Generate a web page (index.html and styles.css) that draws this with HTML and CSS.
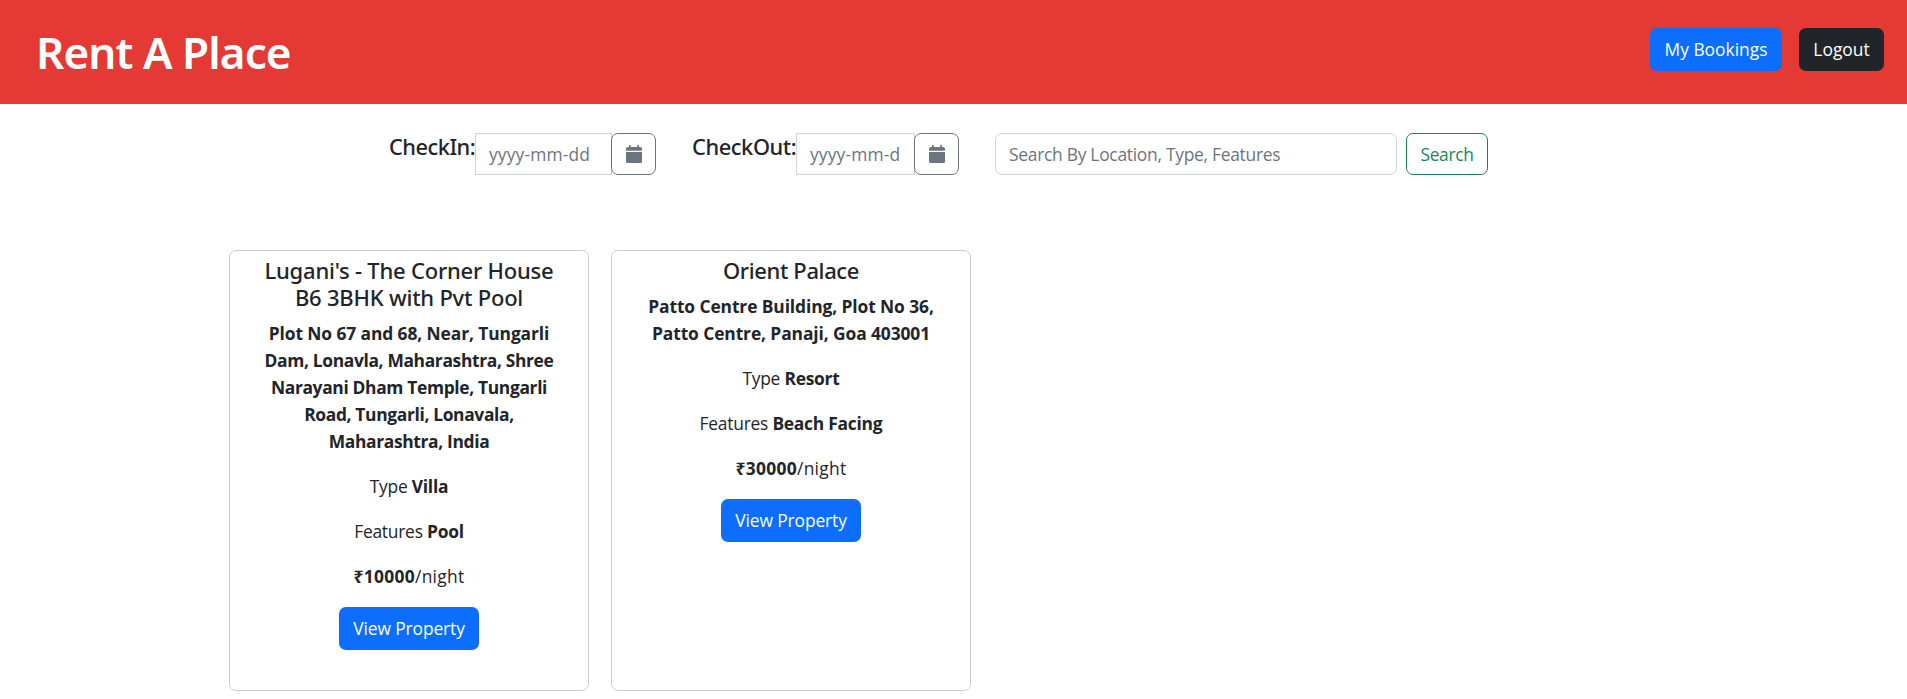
FILE: index.html
```html
<!DOCTYPE html>
<html lang="en">
<head>
<meta charset="utf-8">
<title>Rent A Place</title>
<link rel="stylesheet" href="styles.css">
</head>
<body>
<header class="topbar">
  <h1 class="brand">Rent A Place</h1>
  <nav class="actions">
    <button class="btn btn-primary bookings">My Bookings</button>
    <button class="btn btn-dark logout">Logout</button>
  </nav>
</header>
<form class="filters">
  <div class="date-field checkin">
    <label class="label" for="in">CheckIn:</label>
    <input class="input date" id="in" placeholder="yyyy-mm-dd">
    <button type="button" class="btn btn-calendar" aria-label="Pick a check-in date">
      <svg class="icon" viewBox="0 0 16 18"><path d="M3 0h1.7v2h6.6V0H13v2h1a2 2 0 0 1 2 2v1.8H0V4a2 2 0 0 1 2-2h1zM0 7h16v9.5a1.500 1.500 0 0 1-1.500 1.500h-13A1.500 1.500 0 0 1 0 16.500z"/></svg>
    </button>
  </div>
  <div class="date-field checkout">
    <label class="label" for="out">CheckOut:</label>
    <input class="input date" id="out" placeholder="yyyy-mm-dd">
    <button type="button" class="btn btn-calendar" aria-label="Pick a check-out date">
      <svg class="icon" viewBox="0 0 16 18"><path d="M3 0h1.7v2h6.6V0H13v2h1a2 2 0 0 1 2 2v1.8H0V4a2 2 0 0 1 2-2h1zM0 7h16v9.5a1.500 1.500 0 0 1-1.500 1.500h-13A1.500 1.500 0 0 1 0 16.500z"/></svg>
    </button>
  </div>
  <input class="input search" placeholder="Search By Location, Type, Features">
  <button type="button" class="btn btn-search">Search</button>
</form>
<main class="cards">
  <article class="card">
    <h5 class="card-title">Lugani's - The Corner House<br>B6 3BHK with Pvt Pool</h5>
    <p class="address">Plot No 67 and 68, Near, Tungarli<br><span class="snug">Dam, Lonavla, Maharashtra, Shree<br>Narayani Dham Temple, Tungarli<br>Road, Tungarli, Lonavala,<br>Maharashtra, India</span></p>
    <p class="line">Type <b>Villa</b></p>
    <p class="line">Features <b>Pool</b></p>
    <p class="line price"><b>₹10000</b>/night</p>
    <button class="btn btn-primary view">View Property</button>
  </article>
  <article class="card">
    <h5 class="card-title orient">Orient Palace</h5>
    <p class="address">Patto Centre Building, Plot No 36,<br>Patto Centre, Panaji, Goa 403001</p>
    <p class="line">Type <b>Resort</b></p>
    <p class="line">Features <b>Beach Facing</b></p>
    <p class="line price"><b>₹30000</b>/night</p>
    <button class="btn btn-primary view">View Property</button>
  </article>
</main>
</body>
</html>
```
FILE: styles.css
```css
* {
  box-sizing: border-box;
}

body {
  margin: 0;
  overflow: hidden;
  background: #fff;
  color: #212529;
  font-family: "Open Sans", "Noto Sans", sans-serif;
  font-size: 17.4px;
  line-height: 27px;
}

h1,
h5,
p {
  margin: 0;
}

.topbar {
  display: flex;
  justify-content: space-between;
  align-items: flex-start;
  height: 104px;
  padding: 28px 23px 0 36px;
  background: #e53935;
}

.brand {
  margin-top: -3px;
  color: #fff;
  font-family: "Noto Sans", sans-serif;
  font-size: 44px;
  font-weight: 600;
  line-height: 54px;
  letter-spacing: -0.9px;
}

.actions {
  display: flex;
  gap: 17px;
}

.btn {
  height: 43px;
  padding: 0;
  border: 1px solid transparent;
  border-radius: 7px;
  font: inherit;
  text-align: center;
}

.btn-primary {
  background: #0d6efd;
  color: #fff;
}

.btn-dark {
  background: #212529;
  color: #fff;
}

.bookings {
  width: 132px;
}

.logout {
  width: 85px;
}

.filters {
  display: flex;
  margin: 29px 0 0 389px;
}

.date-field {
  display: flex;
}

.checkout {
  margin: 0 36px;
}

.label {
  width: 86px;
  font-family: "Noto Sans", sans-serif;
  font-size: 21.8px;
  font-weight: 500;
  line-height: 28px;
  letter-spacing: -0.5px;
  white-space: nowrap;
}

.checkout .label {
  width: 104px;
  letter-spacing: -0.4px;
}

.input {
  height: 42px;
  padding: 0 13px;
  border: 1px solid #ced4da;
  border-radius: 0;
  background: #fff;
  color: #212529;
  font: inherit;
}

.input::placeholder {
  color: #6c757d;
  opacity: 1;
}

.date {
  width: 137px;
  letter-spacing: 0.15px;
}

.checkout .date {
  width: 119px;
}

.btn-calendar {
  display: flex;
  align-items: center;
  justify-content: center;
  width: 45px;
  height: 42px;
  margin-left: -1px;
  border-color: #6c757d;
  background: #fff;
}

.icon {
  width: 16px;
  height: 18px;
  fill: #6c757d;
}

.search {
  width: 402px;
  border-radius: 7px;
  letter-spacing: -0.27px;
}

.btn-search {
  width: 82px;
  height: 42px;
  margin-left: 9px;
  border-color: #198754;
  background: #fff;
  color: #198754;
  letter-spacing: -0.35px;
}

.cards {
  display: flex;
  gap: 22px;
  margin: 75px 0 0 229px;
}

.card {
  width: 360px;
  height: 441px;
  padding-top: 6px;
  border: 1px solid #ccc;
  border-radius: 7px;
  text-align: center;
  white-space: nowrap;
}

.card-title {
  margin-bottom: 9px;
  font-family: "Noto Sans", sans-serif;
  font-size: 22px;
  font-weight: 500;
  line-height: 27px;
  letter-spacing: -0.22px;
}

.orient {
  letter-spacing: -0.38px;
}

.address {
  margin-bottom: 18px;
  font-weight: 700;
  letter-spacing: -0.1px;
}

.snug {
  letter-spacing: -0.34px;
}

.line {
  margin-bottom: 18px;
  letter-spacing: -0.24px;
}

.price {
  margin-bottom: 17px;
  letter-spacing: 0.3px;
}

.view {
  width: 140px;
  letter-spacing: -0.1px;
}
```
